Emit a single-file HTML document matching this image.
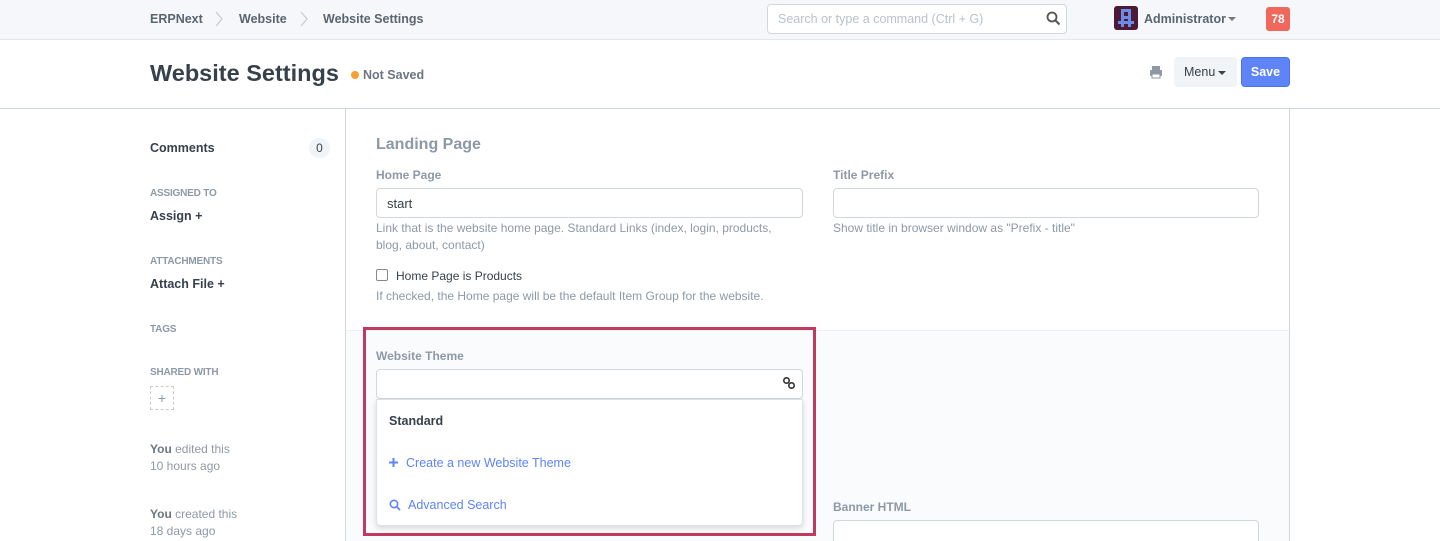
<!DOCTYPE html>
<html><head><meta charset="utf-8"><style>
*{box-sizing:border-box;margin:0;padding:0}
html,body{width:1440px;height:541px;overflow:hidden}
body{font-family:"Liberation Sans",Arial,sans-serif;background:#fff;color:#36414c;position:relative;font-size:12px}
.a{position:absolute}
.nav{left:0;top:0;width:1440px;height:40px;background:#f5f7fa;border-bottom:1px solid #e3e6ea}
.bc{top:12px;font-size:12.5px;font-weight:bold;color:#5a6570}
.lbl{font-size:12px;font-weight:bold;color:#8d99a6}
.inp{border:1px solid #d1d8dd;border-radius:4px;background:#fff;height:30px}
.help{font-size:12px;color:#8d99a6;line-height:17px}
.side{font-size:10px;color:#8d99a6;font-weight:bold;letter-spacing:-.2px}
.sb{font-size:12.5px;font-weight:bold;color:#36414c}
.gray{color:#8d99a6;font-size:12px}
</style></head><body>
<div class="a nav"></div>
<div class="a bc" style="left:150px">ERPNext</div>
<svg class="a" style="left:214px;top:11px" width="10" height="16" viewBox="0 0 10 16"><path d="M2 1L8 8L2 15" fill="none" stroke="#c8ccd0" stroke-width="1.3"/></svg>
<div class="a bc" style="left:239px">Website</div>
<svg class="a" style="left:299px;top:11px" width="10" height="16" viewBox="0 0 10 16"><path d="M2 1L8 8L2 15" fill="none" stroke="#c8ccd0" stroke-width="1.3"/></svg>
<div class="a bc" style="left:323px">Website Settings</div>
<div class="a inp" style="left:767px;top:4px;width:300px;height:30px;"></div>
<div class="a" style="left:778px;top:12px;color:#b8c2cc;font-size:12.5px">Search or type a command (Ctrl + G)</div>
<svg class="a" style="left:1046px;top:11px" width="15" height="15" viewBox="0 0 15 15"><circle cx="6" cy="6" r="4.5" fill="none" stroke="#555" stroke-width="1.8"/><path d="M9.5 9.5L13.5 13.5" stroke="#555" stroke-width="2"/></svg>
<div class="a" style="left:1114px;top:6px;width:24px;height:24px;background:#4a1a36;border-radius:3px"></div>
<svg class="a" style="left:1116px;top:8px" width="20" height="20" viewBox="0 0 20 20" fill="#6b8ce6"><rect x="5" y="1" width="10" height="3"/><rect x="5" y="1" width="3" height="18"/><rect x="12" y="1" width="3" height="18"/><rect x="5" y="8" width="10" height="3"/><rect x="2" y="13" width="16" height="3"/></svg>
<div class="a" style="left:1144px;top:12px;font-size:12.5px;font-weight:bold;color:#5a6570">Administrator</div>
<div class="a" style="left:1228px;top:17px;border:4px solid transparent;border-top-color:#777;border-bottom:0"></div>
<div class="a" style="left:1266px;top:7px;width:24px;height:24px;background:#f0685b;border-radius:3px;color:#fff;font-weight:bold;font-size:12px;text-align:center;line-height:24px">78</div>

<div class="a" style="left:150px;top:60px;font-size:23.5px;font-weight:bold;color:#36414c">Website Settings</div>
<div class="a" style="left:351px;top:71px;width:8px;height:8px;border-radius:50%;background:#f8a133"></div>
<div class="a" style="left:363px;top:68px;font-size:12.5px;font-weight:bold;color:#6c7680">Not Saved</div>
<svg class="a" style="left:1149px;top:65px" width="14" height="14" viewBox="0 0 14 14" fill="#8d99a6"><rect x="3" y="1" width="8" height="4"/><rect x="1" y="5" width="12" height="6" rx="1"/><rect x="3" y="9" width="8" height="4" fill="#fff" stroke="#8d99a6"/></svg>
<div class="a" style="left:1174px;top:57px;width:63px;height:30px;background:#f0f4f7;border-radius:4px;font-size:12.5px;color:#36414c;line-height:30px;padding-left:10px">Menu</div>
<div class="a" style="left:1218px;top:71px;border:4px solid transparent;border-top-color:#36414c;border-bottom:0"></div>
<div class="a" style="left:1241px;top:57px;width:49px;height:30px;background:#5e84f8;border:1px solid #4a72f0;border-radius:4px;font-size:12.5px;font-weight:bold;color:#fff;line-height:28px;text-align:center">Save</div>
<div class="a" style="left:0;top:108px;width:1440px;height:1px;background:#d1d8dd"></div>

<div class="a" style="left:345px;top:109px;width:1px;height:432px;background:#d1d8dd"></div>
<div class="a" style="left:1289px;top:109px;width:1px;height:432px;background:#d1d8dd"></div>
<div class="a" style="left:346px;top:330px;width:943px;height:211px;background:#fafbfc"></div>
<div class="a" style="left:346px;top:330px;width:943px;height:1px;background:#eef0f2"></div>

<div class="a sb" style="left:150px;top:141px">Comments</div>
<div class="a" style="left:309px;top:138px;width:21px;height:20px;border-radius:10px;background:#f0f4f7;text-align:center;line-height:20px;font-size:12px">0</div>
<div class="a side" style="left:150px;top:188px">ASSIGNED TO</div>
<div class="a sb" style="left:150px;top:209px">Assign +</div>
<div class="a side" style="left:150px;top:256px">ATTACHMENTS</div>
<div class="a sb" style="left:150px;top:277px">Attach File +</div>
<div class="a side" style="left:150px;top:324px">TAGS</div>
<div class="a side" style="left:150px;top:367px">SHARED WITH</div>
<div class="a" style="left:150px;top:386px;width:24px;height:24px;border:1px dashed #c8ccd0;text-align:center;line-height:22px;color:#8d99a6;font-size:14px">+</div>
<div class="a gray" style="left:150px;top:442px"><b style="color:#6c7680">You</b> edited this</div>
<div class="a gray" style="left:150px;top:459px">10 hours ago</div>
<div class="a gray" style="left:150px;top:507px"><b style="color:#6c7680">You</b> created this</div>
<div class="a gray" style="left:150px;top:524px">18 days ago</div>

<div class="a" style="left:376px;top:136px;font-size:16px;font-weight:bold;color:#8d99a6">Landing Page</div>
<div class="a lbl" style="left:376px;top:168px">Home Page</div>
<div class="a inp" style="left:376px;top:188px;width:427px"></div>
<div class="a" style="left:387px;top:196px;font-size:13px;color:#36414c">start</div>
<div class="a help" style="left:376px;top:220px">Link that is the website home page. Standard Links (index, login, products,<br>blog, about, contact)</div>
<div class="a" style="left:376px;top:269px;width:12px;height:12px;border:1px solid #888;border-radius:2px;background:#fff"></div>
<div class="a" style="left:396px;top:269px;font-size:12px;color:#36414c">Home Page is Products</div>
<div class="a help" style="left:376px;top:288px">If checked, the Home page will be the default Item Group for the website.</div>
<div class="a lbl" style="left:833px;top:168px">Title Prefix</div>
<div class="a inp" style="left:833px;top:188px;width:426px"></div>
<div class="a help" style="left:833px;top:220px">Show title in browser window as "Prefix - title"</div>

<div class="a lbl" style="left:376px;top:349px">Website Theme</div>
<div class="a inp" style="left:376px;top:369px;width:427px;height:30px"></div>
<svg class="a" style="left:782px;top:376px" width="14" height="14" viewBox="0 0 14 14"><circle cx="4.5" cy="4.5" r="2.7" fill="none" stroke="#333" stroke-width="1.6"/><circle cx="9.5" cy="9.5" r="2.7" fill="none" stroke="#333" stroke-width="1.6"/></svg>
<div class="a" style="left:376px;top:399px;width:427px;height:127px;background:#fff;border:1px solid #dde2e6;border-radius:0 0 4px 4px;box-shadow:0 2px 6px rgba(0,0,0,.15)"></div>
<div class="a" style="left:389px;top:414px;font-size:12.5px;font-weight:bold;color:#36414c">Standard</div>
<svg class="a" style="left:389px;top:458px" width="9" height="9" viewBox="0 0 9 9"><path d="M4.5 0V9M0 4.5H9" stroke="#5e84f8" stroke-width="2"/></svg>
<div class="a" style="left:406px;top:456px;font-size:12.5px;color:#5e84f8">Create a new Website Theme</div>
<svg class="a" style="left:389px;top:499px" width="12" height="12" viewBox="0 0 12 12"><circle cx="5" cy="5" r="3.7" fill="none" stroke="#5e84f8" stroke-width="1.6"/><path d="M7.6 7.6L11 11" stroke="#5e84f8" stroke-width="1.8"/></svg>
<div class="a" style="left:408px;top:498px;font-size:12.5px;color:#5e84f8">Advanced Search</div>

<div class="a lbl" style="left:833px;top:500px">Banner HTML</div>
<div class="a" style="left:833px;top:520px;width:426px;height:21px;border:1px solid #d1d8dd;border-bottom:0;border-radius:4px 4px 0 0;background:#fff"></div>

<div class="a" style="left:363px;top:327px;width:453px;height:209px;border:3px solid #c0395e"></div>
</body></html>
